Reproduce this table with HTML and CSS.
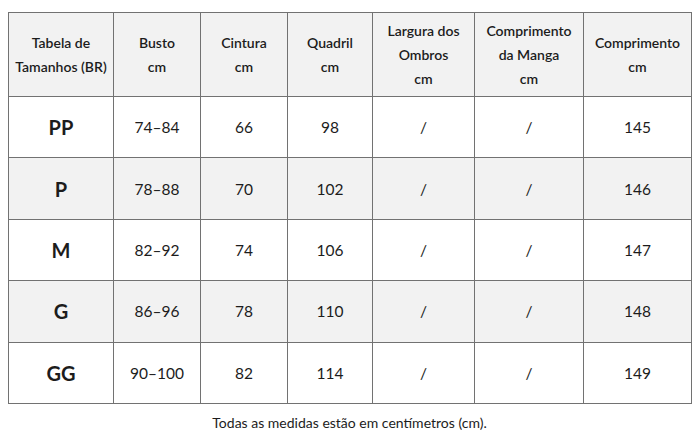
FILE: index.html
```html
<!DOCTYPE html>
<html lang="pt-BR">
<head>
<meta charset="utf-8">
<link rel="stylesheet" href="styles.css">
</head>
<body>
<div class="page">
  <table class="sizes">
    <colgroup>
      <col class="c1"><col class="c2"><col class="c3"><col class="c4"><col class="c5"><col class="c6"><col class="c7">
    </colgroup>
    <thead>
      <tr>
        <th>Tabela de<br>Tamanhos (BR)</th>
        <th>Busto<br>cm</th>
        <th>Cintura<br>cm</th>
        <th>Quadril<br>cm</th>
        <th>Largura dos<br>Ombros<br>cm</th>
        <th>Comprimento<br>da Manga<br>cm</th>
        <th>Comprimento<br>cm</th>
      </tr>
    </thead>
    <tbody>
      <tr><td class="size">PP</td><td>74–84</td><td>66</td><td>98</td><td>/</td><td>/</td><td>145</td></tr>
      <tr class="alt"><td class="size">P</td><td>78–88</td><td>70</td><td>102</td><td>/</td><td>/</td><td>146</td></tr>
      <tr><td class="size">M</td><td>82–92</td><td>74</td><td>106</td><td>/</td><td>/</td><td>147</td></tr>
      <tr class="alt"><td class="size">G</td><td>86–96</td><td>78</td><td>110</td><td>/</td><td>/</td><td>148</td></tr>
      <tr><td class="size">GG</td><td>90–100</td><td>82</td><td>114</td><td>/</td><td>/</td><td>149</td></tr>
    </tbody>
  </table>
  <p class="note">Todas as medidas estão em centímetros (cm).</p>
</div>
</body>
</html>
```

FILE: styles.css
```css
html, body {
  margin: 0;
  padding: 0;
  background: #ffffff;
}
body {
  font-family: "Lato", "Open Sans", sans-serif;
  color: #1c1c1c;
}
.page {
  padding: 12px 9px 0 8px;
}
.sizes {
  width: 683px;
  border-collapse: collapse;
  table-layout: fixed;
}
.c1 { width: 105px; }
.c2 { width: 87px; }
.c3 { width: 87px; }
.c4 { width: 85px; }
.c5 { width: 102px; }
.c6 { width: 109px; }
.c7 { width: 108px; }
.sizes th,
.sizes td {
  border: 1px solid #727272;
  text-align: center;
  padding: 0;
}
.sizes th {
  height: 83px;
  background: #f2f2f2;
  font-weight: 600;
  font-size: 14px;
  line-height: 24px;
}
.sizes td {
  height: 60.4px;
  font-size: 15.5px;
}
.sizes tr.alt td {
  background: #f2f2f2;
}
.sizes td.size {
  font-weight: 700;
  font-size: 20px;
}
.note {
  margin: 10px 0 0;
  text-align: center;
  font-size: 14px;
}
```
